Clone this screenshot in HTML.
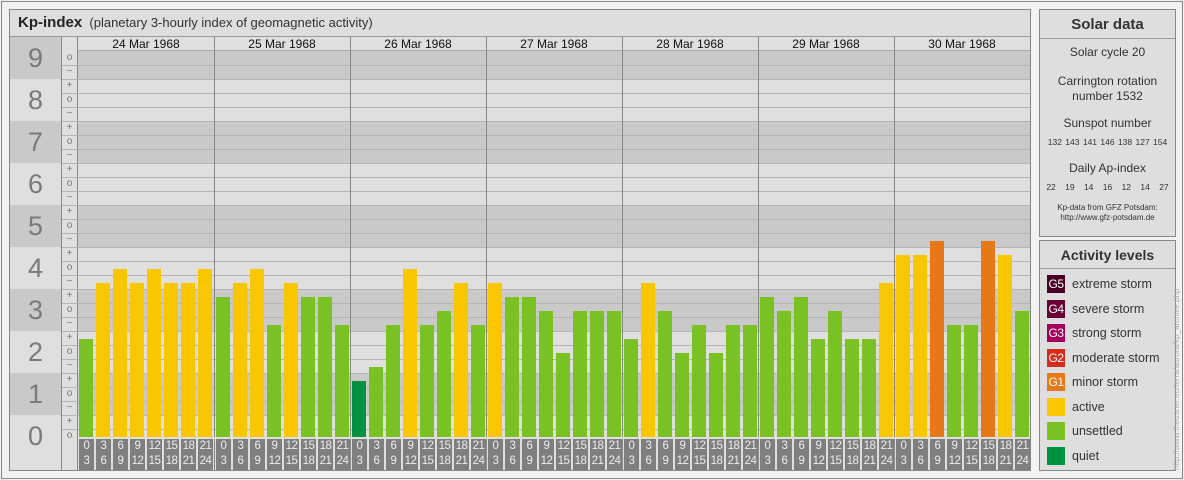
<!DOCTYPE html>
<html><head><meta charset="utf-8"><style>
body{margin:0;width:1184px;height:480px;background:#f2f2f2;font-family:"Liberation Sans",sans-serif;position:relative;overflow:hidden}
.a{position:absolute;box-sizing:border-box}
#frame{left:1px;top:1px;width:1182px;height:478px;border:1px solid #888}
.panel{border:1px solid #888;background:#dedede}
.sd{text-align:center;color:#333;position:absolute;left:0;width:100%}
</style></head><body>
<div class="a" id="frame"></div>
<div class="a panel" style="left:9px;top:9px;width:1022px;height:462px"></div>
<div class="a" style="left:10px;top:10px;width:1020px;height:27px;border-bottom:1px solid #999;background:#dedede;font-size:15px;line-height:26px;padding-left:8px;color:#222"><b>Kp-index</b><span style="font-size:13px;color:#333">&nbsp;&nbsp;(planetary 3-hourly index of geomagnetic activity)</span></div>
<div id="chart"></div>
<div class="a panel" style="left:1039px;top:9px;width:137px;height:228px">
 <div class="a" style="left:0;top:0;width:135px;height:29px;border-bottom:1px solid #999;text-align:center;font-weight:bold;font-size:15px;line-height:29px;color:#333">Solar data</div>
 <div class="sd" style="top:35px;font-size:12px">Solar cycle 20</div>
 <div class="sd" style="top:64px;font-size:12px;line-height:15px">Carrington rotation<br>number 1532</div>
 <div class="sd" style="top:106px;font-size:12px">Sunspot number</div>
 <div class="sd" style="top:127px;font-size:8.5px;word-spacing:1px">132 143 141 146 138 127 154</div>
 <div class="sd" style="top:151px;font-size:12px">Daily Ap-index</div>
 <div class="sd" style="top:172px;font-size:8.5px;word-spacing:7px">22 19 14 16 12 14 27</div>
 <div class="sd" style="top:193px;font-size:8px;line-height:10px">Kp-data from GFZ Potsdam:<br>http://www.gfz-potsdam.de</div>
</div>
<div class="a panel" style="left:1039px;top:240px;width:137px;height:231px">
 <div class="a" style="left:0;top:0;width:135px;height:28px;border-bottom:1px solid #999;text-align:center;font-weight:bold;font-size:14px;line-height:28px;color:#333">Activity levels</div>
 <div id="leg"></div>
</div>
<div class="a" style="left:1172px;top:470px;transform:rotate(-90deg);transform-origin:0 0;font-size:8px;color:#aaa;white-space:nowrap;width:240px">http://www.theusner.eu/terra/aurora/kp_archive.php</div>
<script>
(function(){
var c=document.getElementById('chart'),h='';
function d(s){h+=s}
for(var k=9;k>=0;k--){
 var tp = k==9?37:37+42*(9-k);
 var bt = k==0?470:tp+42;
 var col = (k%2==1)?'#c9c9c9':'#dfdfdf';
 d('<div class="a" style="left:10px;top:'+tp+'px;width:51px;height:'+(bt-tp)+'px;background:'+col+';text-align:center;font-size:27px;line-height:42px;color:#7a7a7a">'+k+'</div>');
 var ct = k==9?51:tp;
 var cb = k==0?443:bt;
 d('<div class="a" style="left:78px;top:'+ct+'px;width:952px;height:'+(cb-ct)+'px;background:'+col+'"></div>');
}
d('<div class="a" style="left:61px;top:37px;width:17px;height:433px;background:#dfdfdf;border-left:1px solid #888;border-right:1px solid #888"></div>');
d('<div class="a" style="left:78px;top:37px;width:952px;height:14px;background:#dfdfdf;border-bottom:1px solid #aaa"></div>');
var signs=['o','−','+'];
for(var i=0;i<28;i++){
 var y=51+14*i;
 if(i>0) d('<div class="a" style="left:62px;top:'+y+'px;width:968px;height:1px;background:#b4b4b4"></div>');
 d('<div class="a" style="left:61px;top:'+y+'px;width:17px;height:14px;text-align:center;font-size:10px;line-height:14px;color:#777">'+signs[i%3]+'</div>');
}
var days=['24','25','26','27','28','29','30'];
var kp=[[7,11,12,11,12,11,11,12],[10,11,12,8,11,10,10,8],[4,5,8,12,8,9,11,8],[11,10,10,9,6,9,9,9],[7,11,9,6,8,6,8,8],[10,9,10,7,9,7,7,11],[13,13,14,8,8,14,13,9]];
var lab=[['0','3'],['3','6'],['6','9'],['9','12'],['12','15'],['15','18'],['18','21'],['21','24']];
for(var j=0;j<7;j++){
 var x0=78+136*j;
 d('<div class="a" style="left:'+x0+'px;top:38px;width:136px;height:13px;text-align:center;font-size:12px;line-height:13px;color:#111">'+days[j]+' Mar 1968</div>');
 if(j>0) d('<div class="a" style="left:'+x0+'px;top:37px;width:1px;height:433px;background:#888"></div>');
 for(var b=0;b<8;b++){
  var v=kp[j][b], bx=x0+(j>0?1:0)+1+17*b;
  var cl=v<=4?'#00923f':v<=10?'#7ac123':v<=13?'#fac600':'#e77817';
  var t=437-14*v;
  d('<div class="a" style="left:'+bx+'px;top:'+t+'px;width:14px;height:'+(437-t)+'px;background:'+cl+'"></div>');
  d('<div class="a" style="left:'+bx+'px;top:439px;width:15px;height:31px;background:#7f7f7f;color:#eee;text-align:center;font-size:11.5px;line-height:15px;letter-spacing:-0.5px">'+lab[b][0]+'<br>'+lab[b][1]+'</div>');
 }
}
d('<div class="a" style="left:78px;top:437px;width:952px;height:2px;background:#dfdfdf"></div>');
c.innerHTML=h;
var L=[['G5','#4b0022','extreme storm'],['G4','#6b0035','severe storm'],['G3','#a5005a','strong storm'],['G2','#da2a1a','moderate storm'],['G1','#e77817','minor storm'],['','#fac600','active'],['','#7ac123','unsettled'],['','#00923f','quiet']];
var g='';
for(var i=0;i<8;i++){
 var y=34+24.5*i;
 g+='<div class="a" style="left:7px;top:'+y+'px;width:18px;height:18px;background:'+L[i][1]+';color:#fff;font-size:12px;line-height:18px;text-align:center;letter-spacing:-0.5px">'+L[i][0]+'</div>';
 g+='<div class="a" style="left:32px;top:'+y+'px;font-size:12.5px;line-height:18px;color:#333;white-space:nowrap">'+L[i][2]+'</div>';
}
document.getElementById('leg').innerHTML=g;
})();
</script>
</body></html>
